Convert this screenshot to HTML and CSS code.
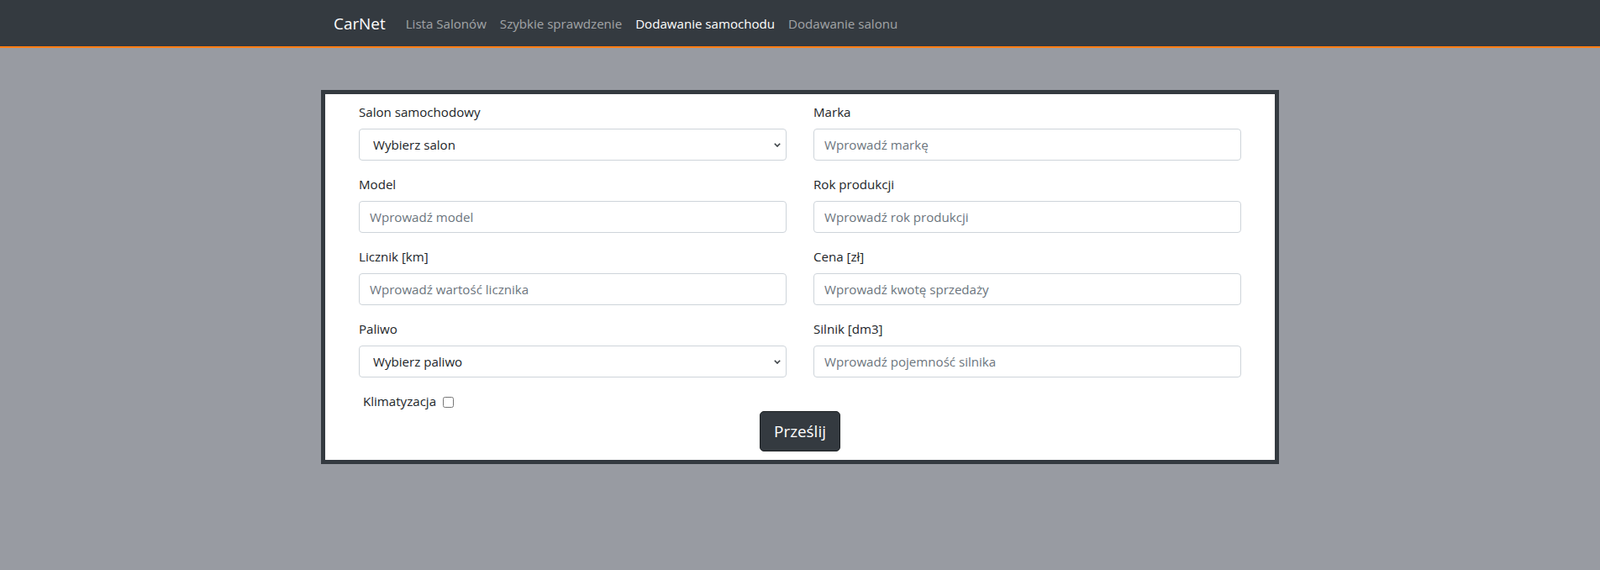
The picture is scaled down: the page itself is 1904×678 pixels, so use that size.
FILE: index.html
```html
<!DOCTYPE html>
<html lang="pl">
<head>
<meta charset="utf-8">
<title>CarNet - Dodawanie samochodu</title>
<link rel="stylesheet" href="styles.css">
</head>
<body>
<nav class="navbar">
  <div class="nav-inner">
    <a class="brand" href="#">CarNet</a>
    <ul class="nav-links">
      <li><a class="nav-link" href="#">Lista Salonów</a></li>
      <li><a class="nav-link" href="#">Szybkie sprawdzenie</a></li>
      <li><a class="nav-link active" href="#">Dodawanie samochodu</a></li>
      <li><a class="nav-link" href="#">Dodawanie salonu</a></li>
    </ul>
  </div>
</nav>
<main class="card">
  <form class="car-form">
    <div class="fields">
      <div class="field">
        <label class="form-label">Salon samochodowy</label>
        <div class="select-wrap">
          <select class="form-control select"><option>Wybierz salon</option></select>
          <svg class="chevron" width="8" height="5" viewBox="0 0 8 5"><path d="M0.8 0.8 L4 4 L7.2 0.8" fill="none" stroke="#3a3f44" stroke-width="1.6"/></svg>
        </div>
      </div>
      <div class="field">
        <label class="form-label">Marka</label>
        <input class="form-control" type="text" placeholder="Wprowadź markę">
      </div>
      <div class="field">
        <label class="form-label">Model</label>
        <input class="form-control" type="text" placeholder="Wprowadź model">
      </div>
      <div class="field">
        <label class="form-label">Rok produkcji</label>
        <input class="form-control" type="text" placeholder="Wprowadź rok produkcji">
      </div>
      <div class="field">
        <label class="form-label">Licznik [km]</label>
        <input class="form-control" type="text" placeholder="Wprowadź wartość licznika">
      </div>
      <div class="field">
        <label class="form-label">Cena [zł]</label>
        <input class="form-control" type="text" placeholder="Wprowadź kwotę sprzedaży">
      </div>
      <div class="field">
        <label class="form-label">Paliwo</label>
        <div class="select-wrap">
          <select class="form-control select"><option>Wybierz paliwo</option></select>
          <svg class="chevron" width="8" height="5" viewBox="0 0 8 5"><path d="M0.8 0.8 L4 4 L7.2 0.8" fill="none" stroke="#3a3f44" stroke-width="1.6"/></svg>
        </div>
      </div>
      <div class="field">
        <label class="form-label">Silnik [dm3]</label>
        <input class="form-control" type="text" placeholder="Wprowadź pojemność silnika">
      </div>
    </div>
    <div class="check-row">
      <label class="check-label">Klimatyzacja <input class="check" type="checkbox"></label>
    </div>
    <div class="actions">
      <button class="btn" type="submit">Prześlij</button>
    </div>
  </form>
</main>
</body>
</html>
```
FILE: styles.css
```css
* { box-sizing: border-box; }
html, body { margin: 0; padding: 0; }
body {
  background: #989ba2;
  font-family: "Open Sans", "Noto Sans", sans-serif;
  font-size: 15.1px;
  line-height: 24px;
  color: #212529;
}
.navbar {
  background: #343a40;
  height: 57px;
  border-bottom: 2px solid #fd7e14;
}
.nav-inner {
  width: 1140px;
  margin: 0 auto;
  padding: 0 15px;
  height: 55px;
  display: flex;
  align-items: center;
}
.brand {
  color: #fff;
  text-decoration: none;
  font-size: 18.9px;
  line-height: 30px;
  margin-right: 16px;
  padding-top: 1px;
}
.nav-links {
  list-style: none;
  margin: 0;
  padding: 0;
  display: flex;
}
.nav-link {
  display: block;
  padding: 8px 8px;
  color: rgba(255, 255, 255, 0.55);
  text-decoration: none;
}
.nav-link.active { color: #fff; }
.card {
  display: block;
  width: 1140px;
  margin: 50px auto 0;
  background: #fff;
  border: 5px solid #343a40;
  padding: 9px 40px 10px;
}
.fields {
  display: grid;
  grid-template-columns: 509px 509px;
  column-gap: 32px;
}
.field { margin-bottom: 16px; }
.form-label {
  display: block;
  margin-bottom: 8px;
  line-height: 24px;
}
.form-control {
  display: block;
  width: 100%;
  height: 38px;
  padding: 6px 12px;
  font-family: inherit;
  font-size: 15.1px;
  line-height: 24px;
  color: #212529;
  background: #fff;
  border: 1px solid #ced4da;
  border-radius: 4px;
  outline: none;
}
.form-control::placeholder { color: #6c757d; opacity: 1; }
.select-wrap { position: relative; }
.select {
  appearance: none;
  -webkit-appearance: none;
  padding-left: 16px;
}
.chevron {
  position: absolute;
  right: 7px;
  top: 17px;
  pointer-events: none;
}
.check-row {
  height: 24px;
  padding-left: 5px;
}
.check-label { line-height: 24px; }
.check {
  width: 13px;
  height: 13px;
  margin: 0 0 0 4px;
  vertical-align: -2px;
}
.actions {
  display: flex;
  justify-content: center;
}
.btn {
  font-family: inherit;
  font-size: 18.9px;
  line-height: 30px;
  height: 48px;
  padding: 8px 16px;
  color: #fff;
  background: #343a40;
  border: 1px solid #1d2124;
  border-radius: 5px;
  cursor: pointer;
}
```
